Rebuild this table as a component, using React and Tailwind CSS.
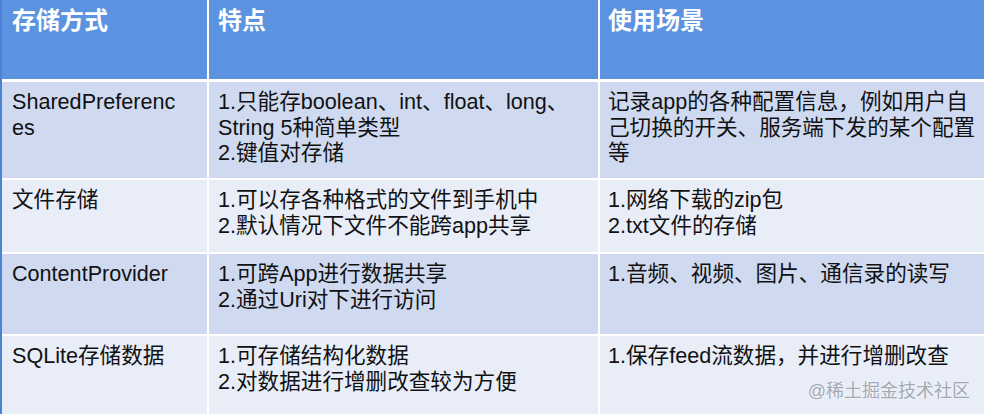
import React from 'react';

const rows = [
  {
    name: ['SharedPreferenc', 'es'],
    feature: ['1.只能存boolean、int、float、long、', 'String 5种简单类型', '2.键值对存储'],
    usage: ['记录app的各种配置信息，例如用户自', '己切换的开关、服务端下发的某个配置', '等'],
    h: 'h-[96px]',
    bg: 'bg-[#cfdaf1]',
  },
  {
    name: ['文件存储'],
    feature: ['1.可以存各种格式的文件到手机中', '2.默认情况下文件不能跨app共享'],
    usage: ['1.网络下载的zip包', '2.txt文件的存储'],
    h: 'h-[72px]',
    bg: 'bg-[#e8edf8]',
  },
  {
    name: ['ContentProvider'],
    feature: ['1.可跨App进行数据共享', '2.通过Uri对下进行访问'],
    usage: ['1.音频、视频、图片、通信录的读写'],
    h: 'h-[80px]',
    bg: 'bg-[#cfdaf1]',
  },
  {
    name: ['SQLite存储数据'],
    feature: ['1.可存储结构化数据', '2.对数据进行增删改查较为方便'],
    usage: ['1.保存feed流数据，并进行增删改查'],
    h: 'h-[79px]',
    bg: 'bg-[#e8edf8]',
  },
];

const font = { fontFamily: '"Liberation Sans", "Noto Sans CJK SC", sans-serif' };

const Lines = ({ items }) =>
  items.map((t) => (
    <div key={t} className="whitespace-nowrap">
      {t}
    </div>
  ));

const App = () => {
  return (
    <div className="relative w-[984px] h-[414px] overflow-hidden bg-white" style={font}>
      <div className="flex flex-col gap-y-[2px] border-l-2 border-[#4a84d6]">
        {/* header */}
        <div className="flex h-[79px] gap-x-[2px] mb-[1px] text-white font-bold text-[24px] leading-[29px]">
          <div className="w-[205px] bg-[#5c93e0] pl-[10px] pt-[6px]">存储方式</div>
          <div className="w-[389px] bg-[#5c93e0] pl-[9px] pt-[6px]">特点</div>
          <div className="flex-1 bg-[#5c93e0] pl-[8px] pt-[6px]">使用场景</div>
        </div>

        {rows.map((row) => (
          <div
            key={row.name[0]}
            className={`flex ${row.h} gap-x-[2px] text-[21.6px] leading-[25.6px] text-[#111]`}
          >
            <div className={`w-[205px] ${row.bg} pl-[10px] pt-[7px]`}>
              <Lines items={row.name} />
            </div>
            <div className={`w-[389px] ${row.bg} pl-[9px] pt-[7px]`}>
              <Lines items={row.feature} />
            </div>
            <div className={`flex-1 ${row.bg} pl-[8px] pt-[7px]`}>
              <Lines items={row.usage} />
            </div>
          </div>
        ))}
      </div>

      {/* watermark */}
      <div
        className="absolute right-[14px] bottom-[13px] text-[18px] leading-[20px] text-[#a3a8b2]"
        style={{ textShadow: '0 0 2px #fff' }}
      >
        @稀土掘金技术社区
      </div>
    </div>
  );
};

export default App;
